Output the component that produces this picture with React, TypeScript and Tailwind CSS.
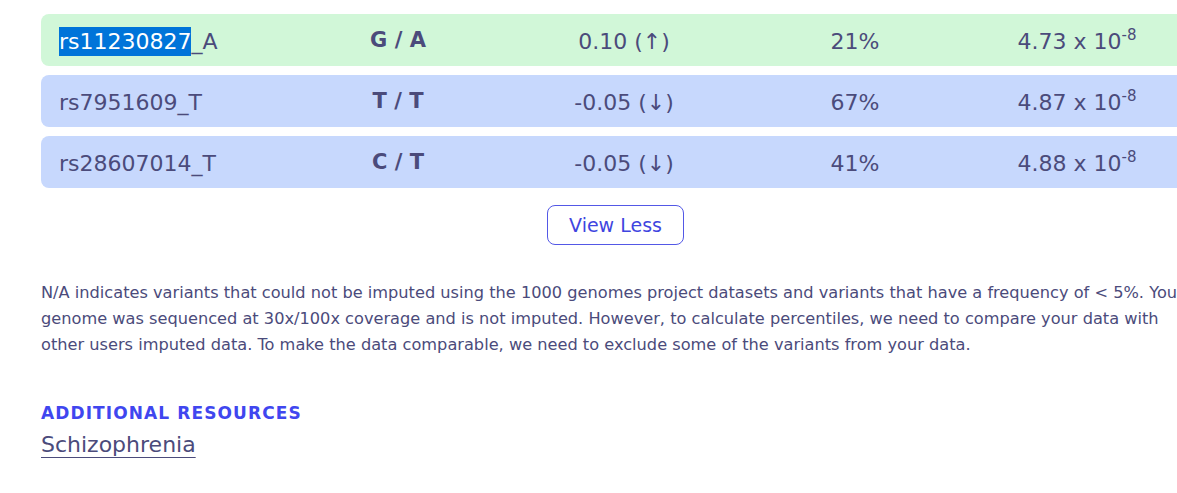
import React from "react";

type Variant = {
  id: string;
  allele: string;
  genotype: string;
  effect: string;
  up: boolean;
  freq: string;
  p: string;
  match?: boolean;
};

const VARIANTS: Variant[] = [
  { id: "rs11230827", allele: "_A", genotype: "G / A", effect: "0.10", up: true, freq: "21%", p: "4.73", match: true },
  { id: "rs7951609", allele: "_T", genotype: "T / T", effect: "-0.05", up: false, freq: "67%", p: "4.87" },
  { id: "rs28607014", allele: "_T", genotype: "C / T", effect: "-0.05", up: false, freq: "41%", p: "4.88" },
];

const VariantRow = ({ v }: { v: Variant }) => (
  <div
    className={`flex items-center h-[52px] w-[1183px] rounded-lg pl-[18px] pt-[2px] text-[22px] text-[#4b4b7b] ${
      v.match ? "bg-[#d1f7d8]" : "bg-[#c7d8fd]"
    }`}
  >
    <div className="w-[251px] shrink-0">
      {v.match ? (
        <span className="bg-[#0074d9] text-white py-[2px]">{v.id}</span>
      ) : (
        v.id
      )}
      {v.allele}
    </div>
    <div className="w-[176px] shrink-0 text-center font-bold text-[21px]">{v.genotype}</div>
    <div className="w-[276px] shrink-0 text-center">
      {v.effect} ({v.up ? "↑" : "↓"})
    </div>
    <div className="w-[186px] shrink-0 text-center">{v.freq}</div>
    <div className="w-[258px] shrink-0 text-center">
      {v.p} x 10<sup className="text-[15px] -top-[0.6em]">-8</sup>
    </div>
  </div>
);

export default function App() {
  return (
    <div className="w-[1177px] h-[493px] overflow-hidden bg-white font-['DejaVu_Sans','Liberation_Sans',sans-serif]">
      <div className="pl-[41px] pt-[14px] w-[1190px]">
        <div className="flex flex-col gap-[9px]">
          {VARIANTS.map((v) => (
            <VariantRow key={v.id} v={v} />
          ))}
        </div>

        <div className="flex justify-center mt-[17px]">
          <button className="w-[137px] h-[40px] rounded-lg border border-[#5358e6] text-[#3f45e0] text-[19px]">
            View Less
          </button>
        </div>

        <p className="mt-[35px] w-[1150px] text-[16.2px] leading-[26px] text-[#4b4b7b]">
          N/A indicates variants that could not be imputed using the 1000 genomes project datasets and variants
          that have a frequency of &lt; 5%. Your genome was sequenced at 30x/100x coverage and is not imputed.
          However, to calculate percentiles, we need to compare your data with other users imputed data. To make
          the data comparable, we need to exclude some of the variants from your data.
        </p>

        <h3 className="mt-[42px] text-[17px] font-bold uppercase tracking-[1.1px] text-[#4046ef] leading-[26px]">
          Additional Resources
        </h3>
        <a className="inline-block mt-[4px] text-[22px] text-[#4b4b7b] underline underline-offset-[5px] decoration-1 leading-[30px]">
          Schizophrenia
        </a>
      </div>
    </div>
  );
}
